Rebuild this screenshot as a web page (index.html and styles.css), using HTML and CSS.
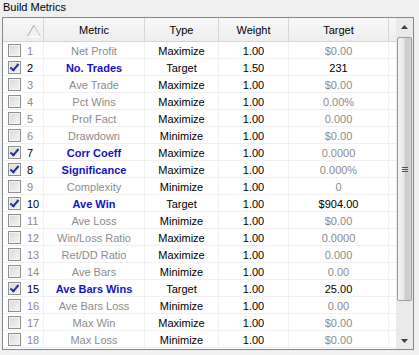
FILE: index.html
```html
<!DOCTYPE html>
<html lang="en">
<head>
  <meta charset="UTF-8">
  <meta name="viewport" content="width=device-width, initial-scale=1.0">
  <title>Build Metrics</title>
  <link rel="stylesheet" href="styles.css">
</head>
<body>
  <div class="caption">Build Metrics</div>
  <div class="frame">
    <div class="grid">
      <table class="metrics">
        <thead>
          <tr>
            <th class="c-sel">
              <svg class="sort" width="16" height="13" viewBox="0 0 16 13">
                <path d="M1.5 12.5 L8 1" stroke="#a4a4a4" fill="none"/>
                <path d="M8 1 L14.5 12.5" stroke="#c4c4c4" fill="none"/>
                <path d="M1.5 12.5 H14.5" stroke="#ffffff" fill="none"/>
              </svg>
            </th>
            <th class="c-name">Metric</th>
            <th class="c-type">Type</th>
            <th class="c-weight">Weight</th>
            <th class="c-target">Target</th>
            <th class="c-pad"></th>
          </tr>
        </thead>
        <tbody>
          <tr><td class="sel"><span class="box"></span><span class="num">1</span></td><td class="name">Net Profit</td><td>Maximize</td><td>1.00</td><td class="val">$0.00</td><td></td></tr>
          <tr class="on goal"><td class="sel"><span class="box checked"></span><span class="num">2</span></td><td class="name">No. Trades</td><td>Target</td><td>1.50</td><td class="val">231</td><td></td></tr>
          <tr><td class="sel"><span class="box"></span><span class="num">3</span></td><td class="name">Ave Trade</td><td>Maximize</td><td>1.00</td><td class="val">$0.00</td><td></td></tr>
          <tr><td class="sel"><span class="box"></span><span class="num">4</span></td><td class="name">Pct Wins</td><td>Maximize</td><td>1.00</td><td class="val">0.00%</td><td></td></tr>
          <tr><td class="sel"><span class="box"></span><span class="num">5</span></td><td class="name">Prof Fact</td><td>Maximize</td><td>1.00</td><td class="val">0.000</td><td></td></tr>
          <tr><td class="sel"><span class="box"></span><span class="num">6</span></td><td class="name">Drawdown</td><td>Minimize</td><td>1.00</td><td class="val">$0.00</td><td></td></tr>
          <tr class="on"><td class="sel"><span class="box checked"></span><span class="num">7</span></td><td class="name">Corr Coeff</td><td>Maximize</td><td>1.00</td><td class="val">0.0000</td><td></td></tr>
          <tr class="on"><td class="sel"><span class="box checked"></span><span class="num">8</span></td><td class="name">Significance</td><td>Maximize</td><td>1.00</td><td class="val">0.000%</td><td></td></tr>
          <tr><td class="sel"><span class="box"></span><span class="num">9</span></td><td class="name">Complexity</td><td>Minimize</td><td>1.00</td><td class="val">0</td><td></td></tr>
          <tr class="on goal"><td class="sel"><span class="box checked"></span><span class="num">10</span></td><td class="name">Ave Win</td><td>Target</td><td>1.00</td><td class="val">$904.00</td><td></td></tr>
          <tr><td class="sel"><span class="box"></span><span class="num">11</span></td><td class="name">Ave Loss</td><td>Minimize</td><td>1.00</td><td class="val">$0.00</td><td></td></tr>
          <tr><td class="sel"><span class="box"></span><span class="num">12</span></td><td class="name">Win/Loss Ratio</td><td>Maximize</td><td>1.00</td><td class="val">0.0000</td><td></td></tr>
          <tr><td class="sel"><span class="box"></span><span class="num">13</span></td><td class="name">Ret/DD Ratio</td><td>Maximize</td><td>1.00</td><td class="val">0.000</td><td></td></tr>
          <tr><td class="sel"><span class="box"></span><span class="num">14</span></td><td class="name">Ave Bars</td><td>Minimize</td><td>1.00</td><td class="val">0.00</td><td></td></tr>
          <tr class="on goal"><td class="sel"><span class="box checked"></span><span class="num">15</span></td><td class="name">Ave Bars Wins</td><td>Target</td><td>1.00</td><td class="val">25.00</td><td></td></tr>
          <tr><td class="sel"><span class="box"></span><span class="num">16</span></td><td class="name">Ave Bars Loss</td><td>Minimize</td><td>1.00</td><td class="val">0.00</td><td></td></tr>
          <tr><td class="sel"><span class="box"></span><span class="num">17</span></td><td class="name">Max Win</td><td>Maximize</td><td>1.00</td><td class="val">$0.00</td><td></td></tr>
          <tr><td class="sel"><span class="box"></span><span class="num">18</span></td><td class="name">Max Loss</td><td>Minimize</td><td>1.00</td><td class="val">$0.00</td><td></td></tr>
        </tbody>
      </table>
    </div>
    <div class="scroll">
      <div class="arrow"><svg width="7" height="4" viewBox="0 0 7 4"><path d="M0 4 L3.5 0 L7 4 Z" fill="#404040"/></svg></div>
      <div class="thumb"><span class="grip"></span></div>
      <div class="track"></div>
      <div class="arrow"><svg width="7" height="4" viewBox="0 0 7 4"><path d="M0 0 L7 0 L3.5 4 Z" fill="#404040"/></svg></div>
    </div>
  </div>
</body>
</html>
```

FILE: styles.css
```css
body {
  margin: 0;
  background: #f0f0f0;
  font-family: "Liberation Sans", Arial, sans-serif;
  font-size: 11px;
  color: #000;
}
.caption {
  height: 15px;
  line-height: 14px;
  padding-left: 3px;
  margin-bottom: 2px;
}
.frame {
  display: flex;
  margin-left: 2px;
  width: 410px;
  height: 331px;
  border: 1px solid #828790;
  background: #fff;
}
.grid {
  width: 393px;
  overflow: hidden;
}
.metrics {
  table-layout: fixed;
  border-collapse: separate;
  border-spacing: 0;
  width: 393px;
}
.metrics th,
.metrics td {
  box-sizing: border-box;
  padding: 0;
  text-align: center;
  white-space: nowrap;
  overflow: hidden;
}
.metrics th {
  height: 24px;
  font-weight: normal;
  background: linear-gradient(#f7f7f7, #eeeeee);
  border-right: 1px solid #d5d5d5;
  border-bottom: 1px solid #d5d5d5;
  vertical-align: middle;
  padding-top: 1px;
}
.c-sel { width: 41px; }
.c-name { width: 101px; }
.c-type { width: 74px; }
.c-weight { width: 70px; }
.c-target { width: 100px; }
.metrics th.c-pad {
  width: 7px;
  border-right: none;
}
.sort {
  display: block;
  margin: 1px 0 0 23px;
}
.metrics td {
  height: 17px;
  line-height: 14px;
  padding-top: 2px;
  vertical-align: top;
  border-right: 1px solid #f0f0f0;
  border-bottom: 1px solid #f0f0f0;
}
.metrics td:last-child {
  border-right: none;
}
.metrics td.sel {
  text-align: left;
  padding: 0 0 0 5px;
}
.box {
  display: inline-block;
  vertical-align: top;
  box-sizing: border-box;
  width: 13px;
  height: 13px;
  margin-top: 2px;
  border: 1px solid #8e8f8f;
  background: linear-gradient(135deg, #d8d8d8, #f6f6f6);
  box-shadow: inset 0 0 0 1px #f4f4f4;
  position: relative;
}
.box.checked::after {
  content: "";
  position: absolute;
  left: 3px;
  top: 0;
  width: 3px;
  height: 7px;
  border: solid #22338a;
  border-width: 0 2px 2px 0;
  transform: rotate(40deg);
}
.num {
  display: inline-block;
  margin-left: 6px;
  padding-top: 2px;
  line-height: 14px;
  color: #8c8c8c;
}
.name,
.val {
  color: #8c8c8c;
}
.on .num {
  color: #000;
}
.on .name {
  color: #1313c6;
  font-weight: bold;
}
.goal .val {
  color: #000;
}
.scroll {
  width: 17px;
  display: flex;
  flex-direction: column;
  background: #eaeaea;
}
.arrow {
  height: 17px;
  display: flex;
  align-items: center;
  justify-content: center;
}
.arrow svg {
  display: block;
}
.thumb {
  box-sizing: border-box;
  height: 264px;
  margin: 2px 1px 0 1px;
  border: 1px solid #9b9b9b;
  border-radius: 2px;
  background: linear-gradient(90deg, #f3f3f3 0, #e8e8e8 45%, #cdcdcd 55%, #cdcdcd 85%, #dedede 100%);
  display: flex;
  align-items: center;
  justify-content: center;
}
.grip {
  width: 6px;
  height: 5px;
  background: repeating-linear-gradient(#555 0 1px, transparent 1px 2px);
}
.track {
  flex: 1;
}
```
